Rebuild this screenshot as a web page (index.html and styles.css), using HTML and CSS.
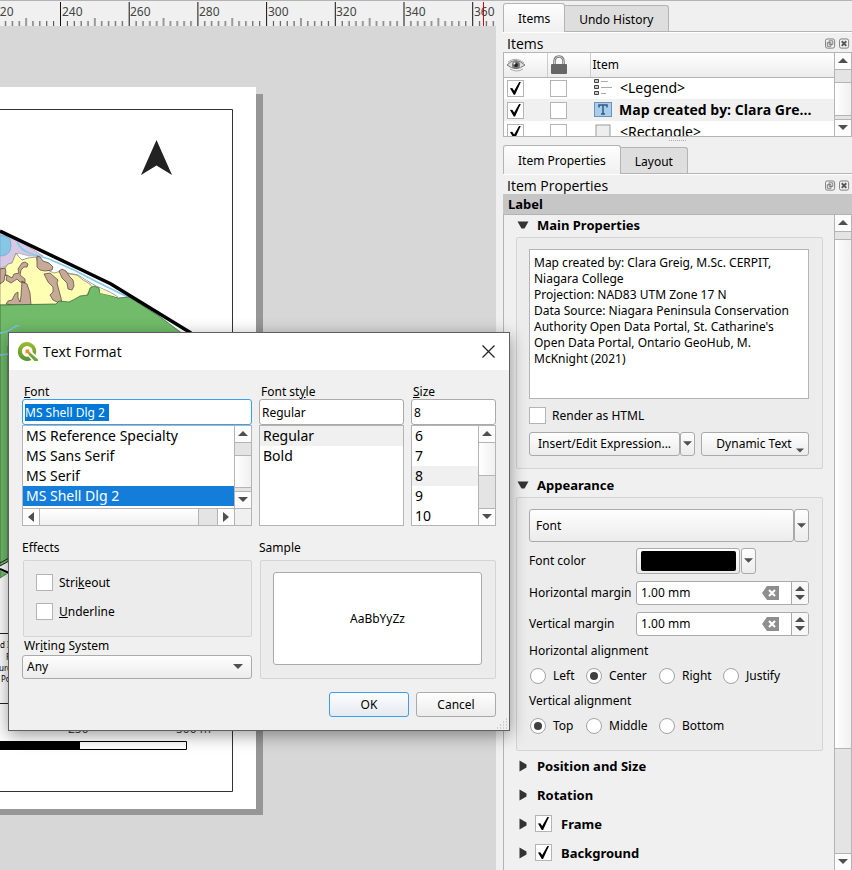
FILE: index.html
```html
<!DOCTYPE html>
<html lang="en">
<head>
<meta charset="utf-8">
<title>Layout – Text Format</title>
<link rel="stylesheet" href="styles.css">
</head>
<body>
<svg class="defs" aria-hidden="true">
  <symbol id="down" viewBox="0 0 10 6"><path d="M0 0h10L5 5z" fill="#4f4f4f"/></symbol>
  <symbol id="up" viewBox="0 0 10 6"><path d="M0 5h10L5 0z" fill="#4f4f4f"/></symbol>
  <symbol id="left" viewBox="0 0 6 10"><path d="M6 0v10L0 5z" fill="#4f4f4f"/></symbol>
  <symbol id="right" viewBox="0 0 6 10"><path d="M0 0v10l6-5z" fill="#4f4f4f"/></symbol>
  <symbol id="float" viewBox="0 0 12 12"><rect x=".5" y=".5" width="10" height="10" rx="2" fill="none" stroke="#777"/><path d="M4.500 2.500h4v4h-4zM2.500 4.500h4v4h-4z" fill="#f0f0f0" stroke="#777"/></symbol>
  <symbol id="close" viewBox="0 0 12 12"><rect x=".5" y=".5" width="10" height="10" rx="2" fill="none" stroke="#777"/><path d="M3 3l5 5M8 3L3 8" stroke="#555" stroke-width="2"/></symbol>
  <symbol id="erase" viewBox="0 0 17 14"><path d="M5 0h12v14H5L0 7z" fill="#8e8e8e"/><path d="M7 4l6 6M13 4l-6 6" stroke="#fff" stroke-width="2"/></symbol>
</svg>

<div class="window">
  <main class="view">
    <svg class="ruler" viewBox="0 1 496 25" preserveAspectRatio="xMinYMin slice" role="img" aria-label="Ruler">
      <defs><pattern id="ticks" x="60" y="0" width="68.700" height="26" patternUnits="userSpaceOnUse">
        <path d="M.5 2v24" stroke="#111"/><path d="M34.850 18v8" stroke="#444"/>
        <path d="M7.370 21v5M14.240 21v5M21.110 21v5M27.980 21v5M41.720 21v5M48.590 21v5M55.460 21v5M62.330 21v5" stroke="#444"/>
      </pattern></defs>
      <rect width="496" height="26" fill="url(#ticks)"/>
      <g class="ruler-text"><text x="-7" y="16">220</text><text x="62" y="16">240</text><text x="130" y="16">260</text><text x="199" y="16">280</text><text x="268" y="16">300</text><text x="336" y="16">320</text><text x="405" y="16">340</text><text x="474" y="16">360</text></g>
      <path d="M483.500 2v24" stroke="#e00000"/>
    </svg>
    <svg class="canvas" viewBox="0 26 496 844" preserveAspectRatio="xMinYMin slice" role="img" aria-label="Map layout page">
      <path d="M0 94h263v721H0z" fill="#969696"/>
      <path d="M0 87h256v722H0z" fill="#fff"/>
      <path d="M0 109.500h232.500v682H0" fill="none" stroke="#333"/>
      <path d="M156.500 140L172 175l-15.500-9.500L141 175z" fill="#222"/>
      <path d="M0 233l20 8 23 15-14 0-11-3-6 11-12 4z" fill="#d8c8e4" stroke="#888" stroke-width=".5"/>
      <path d="M0 235q7 1 10 4 2 7 0 12-3 5-10 5z" fill="#87c7e4" stroke="#6ba5dd" stroke-width=".7"/>
      <path d="M17 242q4 8 12 11l20 6 25 11 25 13 31 15" fill="none" stroke="#85cbea" stroke-width="1.700"/>
      <path d="M0 269l5-1 3-4 4-1 4-10 3 4 3 3 6-2 8-1 2 6 7 6 9 4 8-2 8 3 7 1 6 5 7 4 2 3-3 4-3 6-6 1-7 5-13 1-5 1H0z" fill="#ffffb3" stroke="#777" stroke-width=".7"/>
      <path d="M0 269l5-1 1 4-1 3-1 6-4 3zM5 275l2 0 5 3 2-4 5-1-1-4 4-6 3-1 3 2-1 3-3 0-3 3-1 5 5 4v4l-5-1-3-3-6 4-5-3 1-4zM22 281l5 3 3 9 1 12H14l-8-1 2-3 4-1 3-6 3-2v6l2 4 1-6zM37 256l3 1 3 4 6 2 4 4-1 3-7 1-5-1-3-3zM44 274l6-1 8 7-1 3 4 15 1 6-5-2-4-2-3-5 3-3v-5l-5-5zM59 271l3-2 4 2 4 6 3 3 1 6-2 4-4-1-1-6-5-5z" fill="#c7a998" stroke="#4d4038" stroke-width=".7"/>
      <path d="M68 273l10 2 8 5 10 6 14 6 8 5" fill="none" stroke="#888" stroke-width=".8"/>
      <path d="M0 305l56-1 3-3 10 1 6-3 5-3 8-1 2-7 4-2 5 2 1 5 9 2 9 3 11-1 30 19 40 30H8v227l-8 5z" fill="#71bb6a" stroke="#315f32" stroke-width=".7"/>
      <path d="M100 288l17 9-8-2-9-2z" fill="#ffffb3"/>
      <path d="M0 333q8-1 13-5 4-3 6-2M0 355l9-1" fill="none" stroke="#7fc2e5" stroke-width="1.500"/>
      <path d="M0 231l84 40 27 13 80 49" fill="none" stroke="#000" stroke-width="3.500"/>
      <path d="M0 566l9-5v14l-9-5z" fill="#fff"/><path d="M0 563l9-5M0 566l9-5" stroke="#222"/><path d="M0 569l9 4" stroke="#000" stroke-width="2"/>
      <path d="M0 633.500h9M0 703.500h9" stroke="#222"/>
      <g class="map-note"><text x="0" y="648">d I</text><text x="6" y="660">F</text><text x="-1" y="671">urc</text><text x="1" y="682">Po</text></g>
      <g class="scale-text"><text x="68" y="733">250</text><text x="176" y="733">500 m</text></g>
      <path d="M0 741.500h186.500v8H0z" fill="#fff" stroke="#000"/><path d="M0 741h80v9H0z"/>
    </svg>
  </main>

  <aside class="docks">
    <nav class="tabs"><button class="tab on">Items</button><button class="tab">Undo History</button></nav>
    <header class="dock-title"><h2>Items</h2><button aria-label="Float"><svg><use href="#float"/></svg></button><button aria-label="Close"><svg><use href="#close"/></svg></button></header>
    <section class="tree">
      <div class="tree-view">
        <table>
          <colgroup><col class="c-eye"><col class="c-lock"><col></colgroup>
          <thead><tr>
            <th><svg class="eye" viewBox="0 0 20 16" role="img" aria-label="Visible"><path d="M1 8q8-9 18 0Q10 15 1 8z" fill="#ddd" stroke="#777"/><path d="M2 5q8-6 16 1M4 12q7 4 13 0" fill="none" stroke="#aaa"/><circle cx="10" cy="8" r="4" fill="#777"/><circle cx="10" cy="8" r="2" fill="#222"/><circle cx="8.500" cy="6.500" r="1" fill="#fff"/></svg></th>
            <th><svg class="lock" viewBox="0 0 16 20" role="img" aria-label="Locked"><path d="M3.500 10V7q0-5.500 4.500-5.500T12.500 7v3" fill="none" stroke="#777" stroke-width="2.500"/><path d="M3.500 10V7q0-5.500 4.500-5.500T12.500 7v3" fill="none" stroke="#ddd" stroke-width=".8"/><rect x="0" y="9" width="16" height="10" rx="1" fill="#666"/></svg></th>
            <th>Item</th></tr></thead>
          <tbody>
            <tr><td><input type="checkbox" checked aria-label="Show legend"></td><td><input type="checkbox" aria-label="Lock legend"></td><td><span class="item"><svg viewBox="0 0 18 18"><path d="M.500 .5h4v3h-4zM.500 6.500h4v3h-4zM.500 12.500h4v3h-4z" fill="#ccc" stroke="#444"/><path d="M7 2.500h7M7 8.500h11M7 14.500h5" stroke="#aaa"/></svg>&lt;Legend&gt;</span></td></tr>
            <tr class="current"><td><input type="checkbox" checked aria-label="Show label"></td><td><input type="checkbox" aria-label="Lock label"></td><td><span class="item"><svg viewBox="0 0 18 18"><rect x=".5" y="1.500" width="17" height="14" fill="#a9cdec" stroke="#6b93b8"/><path d="M5 6.500V4h8v2.500M9 4v9M7 13h4" fill="none" stroke="#345a80" stroke-width="1.500"/></svg>Map created by: Clara Gre...</span></td></tr>
            <tr><td><input type="checkbox" checked aria-label="Show rectangle"></td><td><input type="checkbox" aria-label="Lock rectangle"></td><td><span class="item"><svg viewBox="0 0 18 18"><rect x="2" y="2" width="14" height="15" fill="#eee" stroke="#999"/></svg>&lt;Rectangle&gt;</span></td></tr>
          </tbody>
        </table>
      </div>
      <div class="bar"><button aria-label="Scroll up"><svg class="tri"><use href="#up"/></svg></button><i class="groove g12"></i><i class="thumb"></i><i class="groove g4"></i><button aria-label="Scroll down"><svg class="tri"><use href="#down"/></svg></button></div>
    </section>
    <div class="splitter"><i></i></div>

    <nav class="tabs"><button class="tab on">Item Properties</button><button class="tab">Layout</button></nav>
    <header class="dock-title"><h2>Item Properties</h2><button aria-label="Float"><svg><use href="#float"/></svg></button><button aria-label="Close"><svg><use href="#close"/></svg></button></header>
    <h3 class="kind">Label</h3>
    <section class="props">
      <div class="props-body">
        <h4 class="sec"><svg class="open" viewBox="0 0 12 8"><path d="M.5 .5h11l-4 7h-3z" fill="#333"/></svg>Main Properties</h4>
        <div class="group main">
          <textarea aria-label="Label text">Map created by: Clara Greig, M.Sc. CERPIT, Niagara College
Projection: NAD83 UTM Zone 17 N
Data Source: Niagara Peninsula Conservation Authority Open Data Portal, St. Catharine's Open Data Portal, Ontario GeoHub, M. McKnight (2021)</textarea>
          <label class="check"><input type="checkbox">Render as HTML</label>
          <div class="row"><button class="btn grow">Insert/Edit Expression...</button><button class="btn drop" aria-label="Expression menu"><svg class="tri"><use href="#down"/></svg></button><button class="btn dynamic">Dynamic Text<svg class="tri"><use href="#down"/></svg></button></div>
        </div>
        <h4 class="sec"><svg class="open" viewBox="0 0 12 8"><path d="M.5 .5h11l-4 7h-3z" fill="#333"/></svg>Appearance</h4>
        <div class="group look">
          <div class="row font-row"><button class="btn grow">Font</button><button class="btn drop" aria-label="Font menu"><svg class="tri"><use href="#down"/></svg></button></div>
          <div class="row color-row"><label for="color">Font color</label><button class="btn swatch" id="color" aria-label="Font color"><i></i></button><button class="btn drop" aria-label="Color menu"><svg class="tri"><use href="#down"/></svg></button></div>
          <div class="row spin-row"><label for="hm">Horizontal margin</label><div class="spin"><input id="hm" type="text" value="1.00 mm"><button aria-label="Clear"><svg class="erase"><use href="#erase"/></svg></button><span class="steps"><button aria-label="Increase"><svg class="tri"><use href="#up"/></svg></button><button aria-label="Decrease"><svg class="tri"><use href="#down"/></svg></button></span></div></div>
          <div class="row spin-row"><label for="vm">Vertical margin</label><div class="spin"><input id="vm" type="text" value="1.00 mm"><button aria-label="Clear"><svg class="erase"><use href="#erase"/></svg></button><span class="steps"><button aria-label="Increase"><svg class="tri"><use href="#up"/></svg></button><button aria-label="Decrease"><svg class="tri"><use href="#down"/></svg></button></span></div></div>
          <p>Horizontal alignment</p>
          <div class="radios"><label><input type="radio" name="h">Left</label><label><input type="radio" name="h" checked>Center</label><label><input type="radio" name="h">Right</label><label><input type="radio" name="h">Justify</label></div>
          <p>Vertical alignment</p>
          <div class="radios"><label><input type="radio" name="v" checked>Top</label><label><input type="radio" name="v">Middle</label><label><input type="radio" name="v">Bottom</label></div>
        </div>
        <div class="closed">
          <h4><svg viewBox="0 0 8 12"><path d="M.5 .5v11l7-4v-3z" fill="#333"/></svg>Position and Size</h4>
          <h4><svg viewBox="0 0 8 12"><path d="M.5 .5v11l7-4v-3z" fill="#333"/></svg>Rotation</h4>
          <h4><svg viewBox="0 0 8 12"><path d="M.5 .5v11l7-4v-3z" fill="#333"/></svg><label><input type="checkbox" checked>Frame</label></h4>
          <h4><svg viewBox="0 0 8 12"><path d="M.5 .5v11l7-4v-3z" fill="#333"/></svg><label><input type="checkbox" checked>Background</label></h4>
        </div>
      </div>
      <div class="bar"><button aria-label="Scroll up"><svg class="tri"><use href="#up"/></svg></button><i class="groove g8"></i><i class="thumb t5"></i><i class="groove g1"></i><button aria-label="Scroll down"><svg class="tri"><use href="#down"/></svg></button></div>
    </section>
  </aside>

  <section class="dialog" role="dialog" aria-label="Text Format">
    <header>
      <svg class="logo" viewBox="0 0 20 20"><defs><linearGradient id="q" x1="0" y1="0" x2="0" y2="1"><stop offset="0" stop-color="#9dbb2c"/><stop offset="1" stop-color="#549237"/></linearGradient></defs><path d="M9.500 0a9.500 9.500 0 1 0 4 18l-3-3.500A5.300 5.300 0 1 1 14.500 10l3 3A9.500 9.500 0 0 0 9.500 0z" fill="url(#q)"/><path d="M12 10.500l8 7V19h-3.500L10.500 12.500z" fill="#6da832"/><path d="M7.500 7.500h4l-.5 1.500 1.500 2-1.500 1.500-2-1.500-1.500 .5z" fill="#ef8a2b"/></svg>
      <h1>Text Format</h1>
      <button aria-label="Close"><svg viewBox="0 0 13 13"><path d="M.5 .5l12 12M12.500 .5l-12 12" stroke="#222" stroke-width="1.200"/></svg></button>
    </header>
    <div class="pickers">
      <div class="pick">
        <label for="font"><u>F</u>ont</label>
        <div class="field focus"><input id="font" type="text" value="MS Shell Dlg 2" class="marked"></div>
        <div class="list">
          <div class="list-row"><ul role="listbox" aria-label="Fonts"><li role="option">MS Reference Specialty</li><li role="option">MS Sans Serif</li><li role="option">MS Serif</li><li role="option" class="chosen">MS Shell Dlg 2</li></ul>
          <div class="bar"><button aria-label="Scroll up"><svg class="tri"><use href="#up"/></svg></button><i class="groove g12"></i><i class="thumb"></i><i class="groove g4"></i><button aria-label="Scroll down"><svg class="tri"><use href="#down"/></svg></button></div></div>
          <div class="hbar"><button aria-label="Scroll left"><svg><use href="#left"/></svg></button><i class="thumb"></i><i class="groove"></i><button aria-label="Scroll right"><svg><use href="#right"/></svg></button><i class="corner"></i></div>
        </div>
      </div>
      <div class="pick">
        <label for="fstyle">Font st<u>y</u>le</label>
        <div class="field"><input id="fstyle" type="text" value="Regular"></div>
        <div class="list"><ul role="listbox" aria-label="Styles"><li role="option" class="faint">Regular</li><li role="option">Bold</li></ul></div>
      </div>
      <div class="pick">
        <label for="size"><u>S</u>ize</label>
        <div class="field"><input id="size" type="text" value="8"></div>
        <div class="list"><div class="list-row"><ul role="listbox" aria-label="Sizes"><li role="option">6</li><li role="option">7</li><li role="option" class="faint">8</li><li role="option">9</li><li role="option">10</li></ul>
        <div class="bar"><button aria-label="Scroll up"><svg class="tri"><use href="#up"/></svg></button><i class="thumb t1"></i><i class="groove g1g"></i><button aria-label="Scroll down"><svg class="tri"><use href="#down"/></svg></button></div></div></div>
      </div>
    </div>
    <div class="lower">
      <div class="effects">
        <p>Effects</p>
        <div class="group"><label class="check"><input type="checkbox"><span>Stri<u>k</u>eout</span></label><label class="check"><input type="checkbox"><span><u>U</u>nderline</span></label></div>
        <label class="ws" for="ws">Wr<u>i</u>ting System</label>
        <div class="combo"><select id="ws"><option>Any</option></select><svg class="tri"><use href="#down"/></svg></div>
      </div>
      <div class="sample"><p>Sample</p><div class="group"><input type="text" value="AaBbYyZz" aria-label="Sample"></div></div>
    </div>
    <footer><button class="btn ok">OK</button><button class="btn">Cancel</button></footer>
    <svg class="grip" viewBox="0 0 12 12"><path d="M9 1h1M9 4h1M6 4h1M9 7h1M6 7h1M3 7h1M9 10h1M6 10h1M3 10h1M0 10h1" stroke="#aaa" stroke-width="1"/></svg>
  </section>
</div>
</body>
</html>
```
FILE: styles.css
```css
:root {
  --ui: "Noto Sans", "Open Sans", sans-serif;
  --wide: "Open Sans", "Noto Sans", sans-serif;
  --edge: #b4b4b4;
}
* { box-sizing: border-box; }
body { margin: 0; background: #f0f0f0; color: #000; font: 12px/16px var(--ui); }
button, input, select, textarea { font: inherit; color: inherit; margin: 0; }
button { padding: 0; border: 0; background: none; display: flex; align-items: center; justify-content: center; }
h1, h2, h3, h4, p, ul { margin: 0; padding: 0; font-size: inherit; font-weight: inherit; }
ul { list-style: none; }
svg { display: block; flex: none; }
.defs { position: absolute; width: 0; height: 0; }
.tri { width: 10px; height: 6px; }

.window { position: relative; display: flex; height: 100vh; overflow: hidden; border-top: 1px solid #b5b3b5; }
.view { flex: 1; min-width: 0; display: flex; flex-direction: column; background: #d7d7d7; }
.ruler { width: 100%; height: 25px; background: #f0f0f0; }
.canvas { width: 100%; flex: 1; min-height: 0; }
.ruler-text { font: 12px var(--ui); fill: #444; }
.map-note { font: 8px var(--ui); }
.scale-text { font: 12px var(--ui); fill: #444; }

.docks { width: 356px; padding: 2px 0 0 7px; display: flex; flex-direction: column; background: #f0f0f0; }
.tabs { display: flex; align-items: flex-end; height: 29px; border-bottom: 1px solid var(--edge); box-shadow: 0 1px #fff; }
.tab { height: 26px; padding: 2px 14px 0; border: 1px solid var(--edge); border-left: 0; border-bottom: 0; border-radius: 0 3px 0 0; background: #dedede; }
.tab.on { height: 29px; margin-bottom: -1px; border-left: 1px solid var(--edge); border-radius: 3px 3px 0 0; background: linear-gradient(#fefefe, #f0f0f0); }
.dock-title { display: flex; align-items: center; height: 20px; gap: 3px; padding: 3px 2px 0 4px; }
.dock-title h2 { flex: 1; font: 14px/17px var(--wide); }
.dock-title svg { width: 11px; height: 12px; }

.tree { display: flex; height: 85px; border: 1px solid var(--edge); border-right: 0; background: #fff; }
.tree-view { flex: 1; min-width: 0; overflow: hidden; }
.tree table { width: 100%; border-collapse: collapse; table-layout: fixed; }
.c-eye, .c-lock { width: 43px; }
.tree th { height: 24px; padding: 0 2px; text-align: left; font-weight: normal; border-bottom: 1px solid var(--edge); border-right: 1px solid #ccc; background: linear-gradient(#fff, #ececec); }
.tree th:last-child { border-right: 0; }
.tree td { height: 22px; padding: 0 3px; }
.eye { width: 20px; height: 16px; }
.lock { width: 16px; height: 20px; margin-left: 1px; }
.tree .current { background: #f0f0f0; }
.item { display: flex; align-items: center; gap: 8px; font: 14px/20px var(--ui); white-space: nowrap; }
.item svg { width: 18px; height: 18px; margin-left: 1px; }
.current .item { font-family: var(--wide); font-weight: bold; gap: 7px; }

input[type=checkbox], input[type=radio] { appearance: none; flex: none; width: 17px; height: 17px; border: 1px solid var(--edge); background: #fff; display: grid; place-items: center; }
input[type=radio] { width: 16px; height: 16px; border-radius: 50%; border-color: #a4a4a4; }
input[type=checkbox]:checked::before { content: ""; width: 11px; height: 13px; background: #000; clip-path: polygon(0 50%, 20% 48%, 38% 70%, 85% 0, 100% 0, 46% 100%, 34% 100%); }
input[type=radio]:checked::before { content: ""; width: 8px; height: 8px; border-radius: 50%; background: #404040; }

.bar { width: 18px; flex: none; display: flex; flex-direction: column; border-left: 1px solid var(--edge); border-right: 1px solid var(--edge); background: #e6e6e6; }
.bar button { height: 17px; flex: none; background: #fcfcfc; }
.bar button:first-child { border-bottom: 1px solid var(--edge); }
.bar button:last-child { border-top: 1px solid var(--edge); }
.bar .groove { background: #e4e4e4; }
.thumb { background: linear-gradient(90deg, #fff, #f0f0f0); flex: 1; }
.bar .g12 { height: 13px; border-bottom: 1px solid var(--edge); }
.bar .g4 { height: 4px; border-top: 1px solid var(--edge); }
.bar .g8 { height: 8px; border-bottom: 1px solid var(--edge); }
.bar .t5 { flex: 510; border-bottom: 1px solid var(--edge); }
.bar .g1 { flex: 104; }
.bar .t1 { flex: 1; border-bottom: 1px solid var(--edge); }
.bar .g1g { flex: 1; }

.splitter { height: 7px; display: flex; justify-content: center; padding-top: 3px; }
.splitter i { width: 17px; border-top: 1px dotted #aaa; }
.splitter + .tabs { height: 30px; }
.kind { height: 20px; padding: 1px 5px; background: #c6c6c6; font: bold 13px/18px var(--ui); }
.props { flex: 1; min-height: 0; display: flex; border-top: 1px solid var(--edge); border-left: 1px solid var(--edge); }
.props-body { flex: 1; min-width: 0; overflow: hidden; padding: 0 11px 0 12px; }
h4 { display: flex; align-items: center; font: bold 13px/20px var(--ui); }
.sec { height: 22px; padding-bottom: 2px; gap: 8px; padding-left: 1px; }
.open { width: 12px; height: 8px; }
.group { border: 1px solid #d4d4d4; border-radius: 2px; background: #ececec; }
.main { padding: 11px 13px 12px 12px; margin-bottom: 6px; display: flex; flex-direction: column; gap: 8px; }
textarea { display: block; width: 100%; height: 150px; padding: 5px 4px; resize: none; border: 1px solid var(--edge); background: #fff; overflow: hidden; outline: 0; }
.check { display: flex; align-items: center; gap: 6px; }
.row { display: flex; align-items: center; }
.btn { height: 24px; border: 1px solid #aaa; border-radius: 3px; background: linear-gradient(#fefefe, #ececec); }
.grow { flex: 1; }
.drop { width: 15px; }
.drop .tri { width: 9px; }
.dynamic { width: 108px; margin-left: 6px; padding-left: 10px; gap: 4px; }
.dynamic .tri { width: 8px; align-self: flex-end; margin-bottom: 1px; }
.look { padding: 11px 13px 16px 12px; margin-bottom: 6px; }
.font-row .btn { height: 33px; }
.font-row .grow { justify-content: flex-start; padding-left: 6px; }
.color-row { margin-top: 6px; }
.spin-row { margin-top: 7px; }
.row label { width: 107px; }
.color-row .btn { height: 26px; }
.swatch { width: 104px; margin-right: 1px; }
.swatch i { width: 95px; height: 20px; border-radius: 2px; background: #000; }
.spin { flex: 1; display: flex; height: 24px; border: 1px solid #aaa; border-radius: 3px; background: #fff; overflow: hidden; }
.spin input { flex: 1; min-width: 0; padding: 0 4px; border: 0; outline: 0; background: none; }
.erase { width: 17px; height: 14px; margin-right: 12px; }
.steps { width: 17px; display: flex; flex-direction: column; justify-content: center; gap: 3px; border-left: 1px solid #aaa; background: #f8f8f8; }
.look p { margin-top: 7px; }
.look p + .radios { margin-top: 8px; }
.radios { display: grid; grid-template-columns: 56px 73px 64px auto; padding-left: 1px; }
.radios label { display: flex; align-items: center; gap: 7px; height: 17px; }
.radios + p { margin-top: 9px; }
.closed { margin-top: -6px; }
.closed h4 { height: 29px; gap: 10px; padding-left: 3px; }
.closed svg { width: 8px; height: 12px; }
.closed label { display: flex; align-items: center; gap: 9px; margin-left: -2px; }

.dialog { position: absolute; left: 8px; top: 331px; width: 502px; border: 1px solid #5f5f5f; background: #f0f0f0; box-shadow: 0 4px 16px rgba(0, 0, 0, .4); }
.dialog header { display: flex; align-items: center; height: 37px; gap: 5px; padding: 0 14px 0 9px; background: #fff; }
.dialog h1 { flex: 1; font: 14px/20px var(--wide); }
.dialog header button svg { width: 13px; height: 13px; }
.logo { width: 20px; height: 20px; }
.pickers { display: grid; grid-template-columns: 230px 145px 85px; gap: 7px; padding: 14px 13px 0; }
.pick > label { display: block; height: 15px; padding-left: 2px; }
.field { height: 26px; border: 1px solid #aaa; border-radius: 3px; background: #fff; padding: 0 2px; display: flex; align-items: center; }
.focus { border-color: #3a9ff0; }
.field input { width: 100%; height: 17px; padding: 0; border: 0; outline: 0; background: none; }
.field .marked { width: 84px; background: #0078d7; color: #fff; }
.list { height: 101px; border: 1px solid var(--edge); background: #fff; display: flex; flex-direction: column; }
.list-row { flex: 1; min-height: 0; display: flex; }
.list ul { flex: 1; overflow: hidden; }
.list li { height: 20px; padding-left: 3px; font: 14px/20px var(--ui); }
.list li.chosen { background: #137dd9; color: #fff; }
.list li.faint { background: #f0f0f0; }
.list-row .bar { border-right: 0; width: 17px; }
.hbar { height: 17px; display: flex; border-top: 1px solid var(--edge); background: #e4e4e4; }
.hbar button { width: 17px; background: #fcfcfc; border-right: 1px solid var(--edge); }
.hbar .thumb { border-right: 1px solid var(--edge); background: linear-gradient(#fff, #f0f0f0); }
.hbar .groove { width: 19px; border-right: 1px solid var(--edge); }
.hbar .corner { width: 16px; background: #f0f0f0; }
.hbar svg { width: 6px; height: 10px; }
.lower { display: grid; grid-template-columns: 230px 237px; gap: 7px; padding: 14px 13px 0; }
.effects .group { height: 77px; margin: 4px 0 0 1px; padding: 13px 12px; display: flex; flex-direction: column; gap: 12px; }
.ws { display: block; padding-left: 2px; margin-top: 1px; }
.combo { position: relative; margin-top: 1px; }
.combo select { appearance: none; display: block; width: 100%; height: 24px; padding: 0 4px; border: 1px solid #aaa; border-radius: 3px; background: linear-gradient(#fefefe, #ececec); }
.combo .tri { position: absolute; right: 9px; top: 9px; pointer-events: none; }
.sample { display: flex; flex-direction: column; }
.sample .group { flex: 1; margin: 4px 0 0 1px; padding: 11px 13px 13px 12px; }
.sample input { width: 100%; height: 100%; text-align: center; border: 1px solid #aaa; border-radius: 3px; background: #fff; }
footer { display: flex; justify-content: flex-end; gap: 7px; padding: 13px; }
footer .btn { width: 80px; height: 25px; }
.ok { border-color: #3a9ff0; background: linear-gradient(#fdfdfe, #e4eaf0); }
.grip { position: absolute; right: 0; bottom: 0; width: 12px; height: 12px; }
```
